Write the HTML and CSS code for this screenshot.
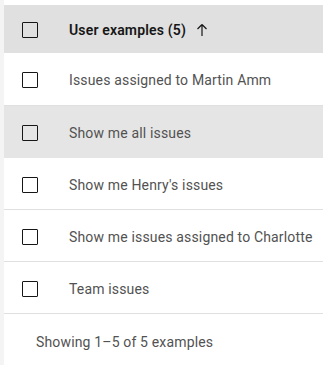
FILE: index.html
```html
<!DOCTYPE html>
<html lang="en">
<head>
  <meta charset="UTF-8">
  <title>User examples</title>
  <link rel="stylesheet" href="styles.css">
</head>
<body>
<div class="page">
  <table class="table">
    <thead>
      <tr>
        <th class="col-check"><span class="checkbox"></span></th>
        <th class="col-name">
          <span class="sort">User examples (5)
            <svg class="arrow" width="16" height="16" viewBox="0 0 16 16"><path d="M8 2.5 L3.5 7 M8 2.5 L12.5 7 M8 2.5 V14" fill="none" stroke="#161616" stroke-width="1.2"/></svg>
          </span>
        </th>
      </tr>
    </thead>
    <tbody>
      <tr><td class="col-check"><span class="checkbox"></span></td><td class="col-name">Issues assigned to Martin Amm</td></tr>
      <tr class="hover"><td class="col-check"><span class="checkbox"></span></td><td class="col-name">Show me all issues</td></tr>
      <tr><td class="col-check"><span class="checkbox"></span></td><td class="col-name">Show me Henry's issues</td></tr>
      <tr><td class="col-check"><span class="checkbox"></span></td><td class="col-name">Show me issues assigned to Charlotte</td></tr>
      <tr><td class="col-check"><span class="checkbox"></span></td><td class="col-name">Team issues</td></tr>
    </tbody>
  </table>
  <div class="footer">Showing 1–5 of 5 examples</div>
</div>
</body>
</html>
```
FILE: styles.css
```css
* {
  margin: 0;
  padding: 0;
  box-sizing: border-box;
}

body {
  background: #fff;
  font-family: Roboto, "Liberation Sans", sans-serif;
  font-size: 14px;
  letter-spacing: 0.16px;
  color: #525252;
}

.page {
  border-left: 4px solid #f4f4f4;
  padding-top: 5px;
  height: 365px;
}

.table {
  width: 100%;
  border-collapse: collapse;
}

.table th {
  height: 48px;
  padding-top: 1px;
  background: #e0e0e0;
  text-align: left;
  font-weight: 600;
  color: #161616;
}

.table td {
  height: 52px;
  padding-top: 3px;
  border-bottom: 1px solid #e0e0e0;
}

.table tr.hover td {
  background: #e5e5e5;
  border-bottom-color: #e5e5e5;
}

.col-check {
  width: 65px;
  padding-left: 18px;
}

.checkbox {
  display: block;
  width: 16px;
  height: 16px;
  border: 1px solid #161616;
  border-radius: 1px;
}

.sort {
  display: flex;
  align-items: center;
  gap: 8px;
}

.footer {
  padding: 20px 0 0 32px;
}
```
